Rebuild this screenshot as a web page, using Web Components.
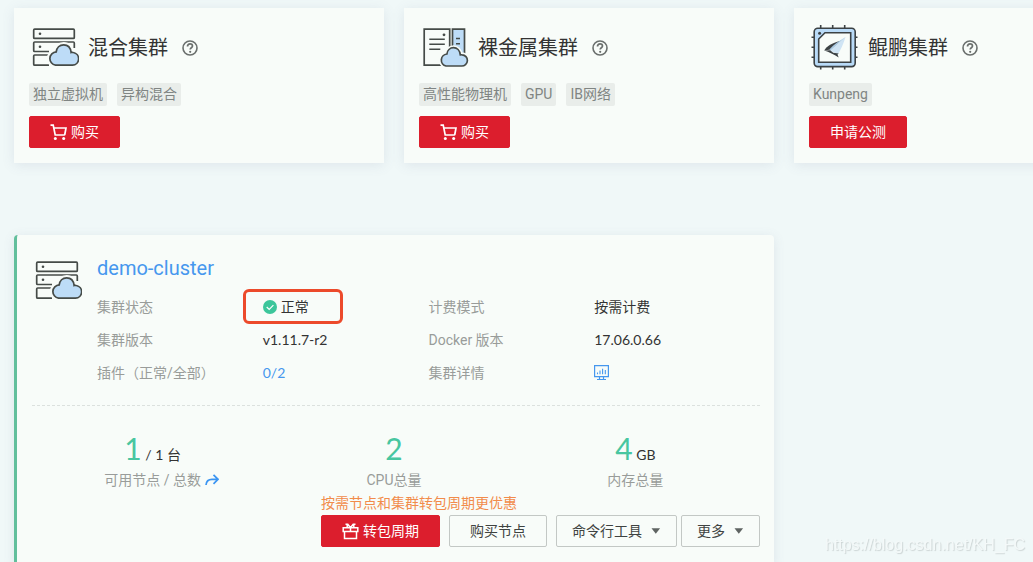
<!DOCTYPE html>
<html lang="zh-CN">
<head>
<meta charset="utf-8">
<meta name="viewport" content="width=device-width, initial-scale=1">
<title>集群管理</title>
<style>
  html { background: #f0f8f8; overflow-x: hidden; }
  body {
    margin: 0;
    font: 14px/20px Roboto, "Noto Sans CJK SC", sans-serif;
    color: #333;
    --surface: #f8fcf9;
    --red: #dc1e2d;
    --green: #48c6a0;
    --link: #4697ee;
    --muted: #999c9a;
    --shadow: 0 2px 12px rgba(90, 100, 140, .12);
    --number-font: Lato, "Noto Sans CJK SC", sans-serif;
  }
</style>
</head>
<body>
<console-page></console-page>

<script>
const define = (name, html) => {
  const template = document.createElement('template');
  template.innerHTML = html;
  customElements.define(name, class extends HTMLElement {
    constructor() {
      super();
      this.attachShadow({ mode: 'open' }).append(template.content.cloneNode(true));
    }
  });
};

const glyphs = {
  hybrid: ['0 0 50 50', `
    <g fill="none" stroke="#454b48" stroke-width="1.7" stroke-linejoin="round">
      <rect x="4.7" y="6.2" width="40.6" height="9.2" rx="1"/>
      <path d="M45.3 25v-5a1 1 0 0 0-1-1H5.7a1 1 0 0 0-1 1v7.5a1 1 0 0 0 1 1H20M20 32H5.7a1 1 0 0 0-1 1v8.2a1 1 0 0 0 1 1H20"/>
    </g>
    <circle cx="11" cy="10.7" r="1.3" fill="#454b48"/><circle cx="11" cy="23.8" r="1.3" fill="#454b48"/>
    <path d="M26.500 42.200h17a6.400 6.400 0 0 0 .8-12.700c-.8-.2-1.600-.2-2.200 0C41.600 25 38.800 21.900 34.700 21.900c-4.200 0-7 3.100-7.500 7a6.700 6.700 0 0 0-.7 13.300z" fill="#bddcf7" stroke="#f8fcf9" stroke-width="6"/>
    <path d="M26.500 42.200h17a6.400 6.400 0 0 0 .8-12.700c-.8-.2-1.600-.2-2.200 0C41.600 25 38.800 21.900 34.700 21.900c-4.200 0-7 3.100-7.500 7a6.700 6.700 0 0 0-.7 13.300z" fill="#bddcf7" stroke="#454b48" stroke-width="1.700"/>`],
  metal: ['0 0 50 50', `
    <g fill="none" stroke="#454b48" stroke-width="1.7">
      <path d="M5.200 6.200h25.500v36H5.200z"/>
      <path d="M33.500 6.200h12v30h-12z" fill="#bddcf7"/>
      <path d="M10.300 16.300h15.500M10.300 21.300h15.500M10.300 26.300h11M37 15.400h4M37 20.800h4" stroke-width="1.500"/>
    </g>
    <circle cx="25" cy="11.800" r="1.400" fill="#454b48"/>
    <path d="M27 43h15.500a5.600 5.600 0 0 0 .6-11.200c-.7-.1-1.200-.1-1.800 0C40.800 27.500 38 24.700 34.500 24.700s-6.200 2.700-6.600 6.300A6.100 6.100 0 0 0 27 43z" fill="#bddcf7" stroke="#f8fcf9" stroke-width="5"/>
    <path d="M27 43h15.500a5.600 5.600 0 0 0 .6-11.200c-.7-.1-1.200-.1-1.800 0C40.800 27.500 38 24.700 34.500 24.700s-6.200 2.700-6.600 6.300A6.100 6.100 0 0 0 27 43z" fill="#bddcf7" stroke="#454b48" stroke-width="1.700"/>`],
  chip: ['0 0 50 50', `
    <g fill="none" stroke="#3c4245" stroke-width="1.6">
      <path d="M11.700 2v3M23.700 2v3M35.700 2v3M11.700 43.500v3M23.700 43.500v3M35.700 43.500v3M2.500 14.300h3M2.500 24.300h3M2.500 34.300h3M45.500 14.300h3M45.500 24.300h3M45.500 34.300h3"/>
      <rect x="5.200" y="5.200" width="41" height="38.400" rx="3.500" fill="#b9dbf8"/>
      <path d="M16 9.700h25.700v29.600H9.700V16z" fill="#f8fcf9"/>
    </g>
    <circle cx="10.600" cy="10.200" r="1.500" fill="#3c4245"/>
    <path d="M36.500 14C31 19 25.500 23.500 20.500 27.500l8.500 3.500c2.500-4 5.500-10 7.500-17z" fill="#cfe4f4"/>
    <path d="M15.200 27.400c3-4.500 7.500-7.200 16-9.400l-9.500 8.500z" fill="#3c4245"/>
    <path d="M36.500 14L21.500 27.200l-1-1C25 21.500 30 18 36.500 14z" fill="#a9c9e2"/>
    <path d="M15.200 27.400l6-.2 3 2.600 5.500.6-1.200 1.200 1.200 3c-5-3.500-9.500-5.500-14.500-7.200z" fill="#3c4245"/>`],
  help: ['0 0 16 16', `
    <circle cx="8" cy="8" r="7" fill="none" stroke="#6a6f6d" stroke-width="1.600"/>
    <path d="M5.500 6.400c0-1.600 1.100-2.500 2.500-2.500s2.500.9 2.500 2.200c0 1.700-2.300 1.700-2.300 3.500" fill="none" stroke="#6a6f6d" stroke-width="1.700"/>
    <circle cx="8.200" cy="11.800" r="1.100" fill="#6a6f6d"/>`],
  cart: ['0 0 17 17', `
    <path d="M.5 1.200h2.700l2 9.800h9.600M4 4h12l-1.300 7" fill="none" stroke="currentColor" stroke-width="1.700"/>
    <circle cx="5.300" cy="14.500" r="1.500" fill="currentColor"/><circle cx="13.700" cy="14.500" r="1.500" fill="currentColor"/>`],
  gift: ['0 0 17 17', `
    <path d="M1.200 4.700h14.600v3.800H1.200zM2.500 8.500v7h12v-7M8.500 4.700v3.800M8.500 4.700L5.800 1.200H3.500M8.500 4.700l2.700-3.500h2.300M5.200 1.500v3M11.800 1.500v3" fill="none" stroke="currentColor" stroke-width="1.500"/>`],
  check: ['0 0 14 14', `
    <circle cx="7" cy="7" r="7" fill="#3cc69b"/>
    <path d="M3.700 7l2.500 2.400 4.200-4.200" fill="none" stroke="#fff" stroke-width="1.200"/>`],
  monitor: ['0 0 15 16', `
    <path d="M.6 .6h13.800v11H.6zM5.500 11.500v2.500M9.500 11.500v2.500M3 14.500h9" fill="none" stroke="#4697ee" stroke-width="1.200"/>
    <path d="M3.500 9.300V7.500M6 9.300V5.500M8.600 9.300V3.700M11.300 9.300V5" stroke="#4697ee" stroke-width="1.100"/>`],
  jump: ['0 0 14 14', `
    <path d="M1 12C1.300 8 3.500 6.300 7 6.300h5.500M8.500 1.800L13 6.300l-4.500 4.500" fill="none" stroke="#3b95f2" stroke-width="1.700"/>`],
  caret: ['0 0 10 6', `<path d="M.5.300h8.600L4.800 5.700z" fill="#5f6462"/>`]
};

/* Draws one glyph of the set at its natural size. */
customElements.define('ui-icon', class extends HTMLElement {
  constructor() {
    super();
    this.attachShadow({ mode: 'open' });
  }
  connectedCallback() {
    const [box, art] = glyphs[this.getAttribute('name')];
    const [, , w, h] = box.split(' ');
    this.shadowRoot.innerHTML = `
      <style>
        :host { display: block; flex: none; width: ${w}px; height: ${h}px; }
        svg { display: block; width: 100%; height: 100%; }
      </style>
      <svg viewBox="${box}" aria-hidden="true">${art}</svg>`;
  }
});

define('ui-tag', `
  <style>
    :host { display: block; padding: 0 4px; border-radius: 2px; background: #e9edea; color: #808583; line-height: 23px; white-space: nowrap; }
  </style>
  <slot></slot>`);

define('ui-button', `
  <style>
    :host { display: block; flex: none; }
    button {
      display: flex; align-items: center; gap: 4px; box-sizing: border-box; height: 32px; margin: 0; padding: 0 20px;
      border: 1px solid #c3c8c5; border-radius: 2px; background: transparent; color: #3f4341; font: inherit; white-space: nowrap; cursor: pointer;
    }
    :host([kind=primary]) button { border-color: var(--red); background: var(--red); color: #fff; }
    :host([kind=menu]) button { gap: 9px; padding: 0 15px; }
  </style>
  <button type="button"><slot></slot></button>`);

define('cluster-offer', `
  <style>
    :host { display: block; padding: 15px; background: var(--surface); box-shadow: var(--shadow); }
    header { display: flex; align-items: center; height: 50px; }
    h2 { margin: 0 14px 0 9px; font-size: 20px; line-height: 28px; font-weight: 400; white-space: nowrap; }
    .help { padding: 0; border: 0; background: none; cursor: pointer; }
    .tags { display: flex; gap: 10px; margin: 10px 0; }
  </style>
  <header>
    <slot name="icon"></slot>
    <h2><slot name="title"></slot></h2>
    <button class="help" type="button" aria-label="帮助"><ui-icon name="help"></ui-icon></button>
  </header>
  <div class="tags"><slot name="tag"></slot></div>
  <slot name="action"></slot>`);

define('info-item', `
  <style>
    :host { display: grid; grid-template-columns: 1fr 1fr; align-items: center; height: 33px; white-space: nowrap; }
    .label { color: var(--muted); }
    .value { display: flex; align-items: center; gap: 4px; font-family: var(--number-font); }
  </style>
  <div class="label"><slot name="label"></slot></div>
  <div class="value"><slot></slot></div>`);

define('stat-item', `
  <style>
    :host { display: block; text-align: center; white-space: nowrap; }
    .figure { height: 36px; font-family: var(--number-font); line-height: 36px; }
    .label { display: flex; justify-content: center; align-items: center; gap: 4px; margin-top: 4px; color: var(--muted); }
    ::slotted(strong) { color: var(--green); font-size: 30px; font-weight: 400; }
    ::slotted(a) { margin-right: -18px; }
  </style>
  <div class="figure"><slot name="number"></slot> <slot name="unit"></slot></div>
  <div class="label"><slot></slot></div>`);

define('cluster-panel', `
  <style>
    :host { display: block; padding: 21px 14px 20px 15px; border-left: 3px solid #62bf9c; border-radius: 4px; background: var(--surface); box-shadow: var(--shadow); }
    .summary { display: grid; grid-template-columns: 50px 1fr; gap: 15px; padding-bottom: 16px; border-bottom: 1px dashed #dce1de; }
    h2 { margin: 0 0 10px; font-size: 20px; line-height: 24px; font-weight: 400; }
    a { color: var(--link); text-decoration: none; }
    .info { display: grid; grid-template-columns: 1fr 1fr; }
    .status { display: flex; align-items: center; gap: 4px; position: relative; }
    .mark { position: absolute; left: -20px; top: -8px; box-sizing: border-box; width: 100px; height: 35px; border: 3px solid #ec4a2b; border-radius: 6px; }
    .stats { display: grid; grid-template-columns: 1fr 1fr 1fr; margin: 24px 4px 3px 0; }
    .footer { width: max-content; margin-left: auto; }
    .hint { margin: 0 0 2px; color: #f28c4b; }
    .actions, .menus { display: flex; gap: 9px; }
    .menus { gap: 4px; }
  </style>
  <section class="summary">
    <ui-icon name="hybrid"></ui-icon>
    <div>
      <h2><a href="#cluster">demo-cluster</a></h2>
      <div class="info">
        <info-item><span slot="label">集群状态</span><span class="status"><ui-icon name="check"></ui-icon>正常<span class="mark"></span></span></info-item>
        <info-item><span slot="label">计费模式</span>按需计费</info-item>
        <info-item><span slot="label">集群版本</span>v1.11.7-r2</info-item>
        <info-item><span slot="label">Docker 版本</span>17.06.0.66</info-item>
        <info-item><span slot="label">插件（正常/全部）</span><a href="#addons">0/2</a></info-item>
        <info-item><span slot="label">集群详情</span><a href="#detail" aria-label="集群详情"><ui-icon name="monitor"></ui-icon></a></info-item>
      </div>
    </div>
  </section>
  <section class="stats">
    <stat-item><strong slot="number">1</strong><span slot="unit">/ 1 台</span>可用节点 / 总数<a href="#nodes" aria-label="查看节点"><ui-icon name="jump"></ui-icon></a></stat-item>
    <stat-item><strong slot="number">2</strong>CPU总量</stat-item>
    <stat-item><strong slot="number">4</strong><span slot="unit">GB</span>内存总量</stat-item>
  </section>
  <div class="footer">
    <p class="hint">按需节点和集群转包周期更优惠</p>
    <div class="actions">
      <ui-button kind="primary"><ui-icon name="gift"></ui-icon>转包周期</ui-button>
      <ui-button>购买节点</ui-button>
      <div class="menus">
        <ui-button kind="menu">命令行工具<ui-icon name="caret"></ui-icon></ui-button>
        <ui-button kind="menu">更多<ui-icon name="caret"></ui-icon></ui-button>
      </div>
    </div>
  </div>`);

define('page-watermark', `
  <style>
    :host { display: block; position: fixed; right: 8px; bottom: 7px; font: 16px/20px "Liberation Sans", sans-serif; color: #f4f9f9; text-shadow: 1px 1px 1px #ccd4d4; pointer-events: none; }
  </style>
  <slot></slot>`);

define('console-page', `
  <style>
    :host { display: block; overflow-x: hidden; }
    main { display: grid; grid-template-columns: repeat(3, minmax(370px, 1fr)); column-gap: 20px; row-gap: 72px; padding: 8px 14px 0; }
    cluster-panel { grid-column: span 2; }
  </style>
  <main>
    <cluster-offer>
      <ui-icon slot="icon" name="hybrid"></ui-icon><span slot="title">混合集群</span>
      <ui-tag slot="tag">独立虚拟机</ui-tag><ui-tag slot="tag">异构混合</ui-tag>
      <ui-button slot="action" kind="primary"><ui-icon name="cart"></ui-icon>购买</ui-button>
    </cluster-offer>
    <cluster-offer>
      <ui-icon slot="icon" name="metal"></ui-icon><span slot="title">裸金属集群</span>
      <ui-tag slot="tag">高性能物理机</ui-tag><ui-tag slot="tag">GPU</ui-tag><ui-tag slot="tag">IB网络</ui-tag>
      <ui-button slot="action" kind="primary"><ui-icon name="cart"></ui-icon>购买</ui-button>
    </cluster-offer>
    <cluster-offer>
      <ui-icon slot="icon" name="chip"></ui-icon><span slot="title">鲲鹏集群</span>
      <ui-tag slot="tag">Kunpeng</ui-tag>
      <ui-button slot="action" kind="primary">申请公测</ui-button>
    </cluster-offer>
    <cluster-panel></cluster-panel>
  </main>
  <page-watermark>https://blog.csdn.net/KH_FC</page-watermark>`);
</script>
</body>
</html>
